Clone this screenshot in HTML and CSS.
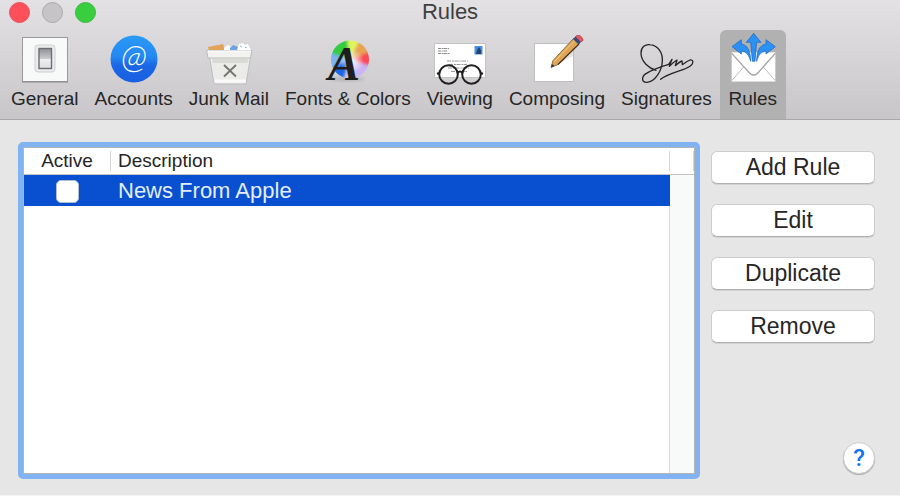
FILE: index.html
```html
<!DOCTYPE html>
<html lang="en">
  <head>
    <meta charset="UTF-8" />
    <meta name="viewport" content="width=device-width, initial-scale=1.0" />
    <title>Rules</title>
    <link rel="stylesheet" href="styles.css">
  </head>
  <body>
    <header class="window-header">
      <div class="title-bar">
        <div class="lights">
          <button class="light close" aria-label="Close"></button>
          <button class="light minimize" aria-label="Minimize"></button>
          <button class="light expand" aria-label="Zoom"></button>
        </div>
        <h1>Rules</h1>
      </div>
      <nav class="toolbar">
        <button class="tab">
          <svg viewBox="0 0 54 54" aria-hidden="true">
            <defs>
              <linearGradient id="switch" x2="0" y2="1">
                <stop offset="0" stop-color="#8f8f94" />
                <stop offset="0.5" stop-color="#c9cacd" />
                <stop offset="0.55" stop-color="#f0f0f2" />
                <stop offset="1" stop-color="#dcdde0" />
              </linearGradient>
            </defs>
            <rect x="4.5" y="6.5" width="45" height="44" fill="#f8f9f9" stroke="#9a9a9a" />
            <path d="M4 51h46" stroke="#8a8a8a" />
            <rect x="17" y="14" width="20" height="27" rx="3" fill="#ececee" stroke="#cfcfd2" />
            <rect x="21" y="17.5" width="12.500" height="20" fill="url(#switch)" stroke="#6d6e72" stroke-width="1.4" />
          </svg>
          General
        </button>
        <button class="tab">
          <svg viewBox="0 0 54 54" aria-hidden="true">
            <defs>
              <linearGradient id="at" x2="0" y2="1">
                <stop offset="0" stop-color="#2a9af6" />
                <stop offset="0.45" stop-color="#2488f2" />
                <stop offset="0.65" stop-color="#1a66e4" />
                <stop offset="1" stop-color="#1a5fe2" />
              </linearGradient>
            </defs>
            <circle cx="27" cy="28" r="23.500" fill="url(#at)" />
            <text class="at-sign" x="27" y="37" text-anchor="middle">@</text>
          </svg>
          Accounts
        </button>
        <button class="tab">
          <svg viewBox="0 0 54 54" aria-hidden="true">
            <path d="M6 16l15-3 2 7H7z" fill="#e0a45a" />
            <path d="M22 17l4-3 4 3v4h-8z" fill="#fff" />
            <path d="M28 17l3-3 5 2 1 4h-9z" fill="#6ea3e6" />
            <path d="M35 19l2-6 4-1 2 2 3-1 3 6z" fill="#fff" />
            <path d="M38 15l2 1M43 16l2 1" stroke="#8fb4e6" />
            <path d="M7.500 26h41L44 53H12z" fill="#ebebe9" stroke="#bdbdbd" />
            <path d="M10 28h36l-.5 4H11z" fill="#d9d9d5" />
            <path d="M13 50h31" stroke="#fafafa" stroke-width="3" />
            <path d="M4.500 19.500h45.500l-1.500 7.500H6z" fill="#f2f2f0" stroke="#bcbcbc" />
            <path d="M6 20h43" stroke="#fff" />
            <path d="M22 34l12 11.500M34 34L22 45.500" stroke="#74746c" stroke-width="1.800" />
          </svg>
          Junk Mail
        </button>
        <button class="tab">
          <svg viewBox="0 0 54 54" aria-hidden="true">
            <defs>
              <clipPath id="wheelClip"><circle cx="29" cy="28.500" r="19" /></clipPath>
              <filter id="soften" x="-20%" y="-20%" width="140%" height="140%"><feGaussianBlur stdDeviation="1.600" /></filter>
              <radialGradient id="wheelCenter">
                <stop offset="0" stop-color="#fff" />
                <stop offset="0.35" stop-color="#fff" stop-opacity="0.600" />
                <stop offset="1" stop-color="#fff" stop-opacity="0" />
              </radialGradient>
            </defs>
            <ellipse cx="26" cy="48" rx="17" ry="2.500" fill="#888" opacity="0.350" filter="url(#soften)" />
            <g clip-path="url(#wheelClip)">
              <g filter="url(#soften)">
                <path d="M29 28.500L0 22 12 0h15z" fill="#35cb42" />
                <path d="M29 28.500L25 0h26z" fill="#dff561" />
                <path d="M29 28.500L43 0l14 20z" fill="#e8a354" />
                <path d="M29 28.500L58 17v24z" fill="#fb4a57" />
                <path d="M29 28.500L58 38 36 58z" fill="#c8b5f2" />
                <path d="M29 28.500L38 58H17z" fill="#cdd5fb" />
                <path d="M29 28.500L20 58 0 40z" fill="#1d66e4" />
                <path d="M29 28.500L0 42V19z" fill="#7bb2f2" />
              </g>
              <circle cx="31" cy="30" r="12" fill="url(#wheelCenter)" />
            </g>
            <text class="letter" x="7" y="49">A</text>
          </svg>
          Fonts &amp; Colors
        </button>
        <button class="tab">
          <svg viewBox="0 0 54 54" aria-hidden="true">
            <rect x="1.500" y="12.500" width="51" height="34" fill="#fff" stroke="#c4c4c4" />
            <path d="M5 17.500h11M5 20h9M5 22.500h12" stroke="#8b8b8b" stroke-dasharray="3 0.600 2 0.400" />
            <path d="M14 30h21M16 33.500h18M15 37h21M18 40.500h16" stroke="#999" stroke-dasharray="4 1 2 0.500" />
            <rect x="41.500" y="15" width="8" height="8.500" fill="#4a8ee8" />
            <path d="M43 23l1-4 2-3 2 3v4z" fill="#26436f" />
            <g fill="none" stroke="#202020" stroke-width="2">
              <circle cx="15.500" cy="43.500" r="9.300" />
              <circle cx="38.500" cy="43.500" r="9.300" />
              <path d="M24.500 42q2.500-3 5 0M6.500 42l-2.500.8M47.500 42l2.500.8" />
            </g>
          </svg>
          Viewing
        </button>
        <button class="tab">
          <svg viewBox="0 0 54 54" aria-hidden="true">
            <rect x="4.500" y="12.500" width="39" height="38" fill="#fff" stroke="#bfbfbf" />
            <path d="M23 36l20-11v-5L30 27z" fill="#e4e4e4" />
            <path d="M21 36.500l2-7L44 7l5.500 5.500L28 33.500z" fill="#dda657" stroke="#7c5527" stroke-width="0.800" />
            <path d="M24 31L45 9.500" stroke="#f1c886" />
            <path d="M28 33.500l21-20.500" stroke="#4c3218" stroke-width="1.200" />
            <path d="M21 36.500l1-3.500 2.500 2z" fill="#333" />
            <path d="M43 8l2.500-2.500 5.500 5.500-2.500 2.500z" fill="#374a78" />
            <path d="M45.500 5.500l1.500-1q3-1 5 2t.5 3.500L51 11z" fill="#e75762" stroke="#873b45" stroke-width="0.600" />
          </svg>
          Composing
        </button>
        <button class="tab">
          <svg viewBox="78 18 162 162" aria-hidden="true">
            <path d="M129 136C108 130 84 110 84 84c0-18 13-27 27-25 24 2 38 24 37 48-1 31-22 63-46 65-17 1-17-17-3-26 17-11 41-20 68-28l10-15-8 21c8-8 16-15 23-19l-5 17c8-7 14-12 20-14l1 11c7-5 15-11 23-14 10-2 12 9 2 17-21 17-62 18-90 41" fill="none" stroke="#262626" stroke-width="4" stroke-linecap="round" stroke-linejoin="round" />
          </svg>
          Signatures
        </button>
        <button class="tab selected" aria-current="page">
          <svg viewBox="51 33 162 162" aria-hidden="true">
            <rect x="68" y="97" width="131" height="88" fill="#fff" />
            <path d="M69 181l35-40M198 181l-35-40" stroke="#bcbcbc" stroke-width="3" />
            <path d="M68 100l49 54q17 22 34 0l48-54" fill="#fff" stroke="#a2a2a2" stroke-width="4" />
            <path d="M69 184.500h130" stroke="#d5d5d5" stroke-width="2" />
            <g fill="#2c91f5" stroke="#1763bd" stroke-width="2" stroke-linejoin="round">
              <path d="M134 40l22 27h-13l-5 57h-8l-5-57h-13z" />
              <path d="M69 80l28-21v13c20 3 28 23 28 52-5-18-13-30-28-31v9z" />
              <path d="M199 80l-28-21v13c-20 3-28 23-28 52 5-18 13-30 28-31v9z" />
            </g>
          </svg>
          Rules
        </button>
      </nav>
    </header>

    <main class="panel">
      <div class="rules-list">
        <table>
          <thead>
            <tr>
              <th class="col-active"><span>Active</span></th>
              <th class="col-description"><span>Description</span></th>
              <th class="col-scroll"><span></span></th>
            </tr>
          </thead>
          <tbody>
            <tr class="rule selected">
              <td class="col-active"><input type="checkbox" id="rule1" /></td>
              <td class="col-description"><label for="rule1">News From Apple</label></td>
              <td class="col-scroll"></td>
            </tr>
          </tbody>
        </table>
      </div>
      <div class="actions">
        <button class="action">Add Rule</button>
        <button class="action">Edit</button>
        <button class="action">Duplicate</button>
        <button class="action">Remove</button>
        <button class="help">?</button>
      </div>
    </main>
  </body>
</html>
```
FILE: styles.css
```css
* {
  box-sizing: border-box;
}
body {
  margin: 0;
  min-height: 100vh;
  display: flex;
  flex-direction: column;
  font-family: "Liberation Sans", Arial, sans-serif;
  background-color: #e6e6e6;
  color: #262626;
}
button {
  font-family: inherit;
  color: inherit;
  border: none;
  padding: 0;
}

/* Title bar and toolbar */
.window-header {
  background: linear-gradient(#e3e1e4, #c8c6c9);
  border-bottom: 1px solid #a8a8a8;
}
.title-bar {
  display: grid;
  grid-template-columns: 1fr auto 1fr;
  align-items: center;
  height: 24px;
  margin-bottom: 6px;
}
.lights {
  display: flex;
  gap: 12px;
  padding-left: 9px;
}
.light {
  width: 21px;
  height: 21px;
  border-radius: 50%;
}
.close {
  background-color: #fb4f5b;
  border: 1px solid #e9515b;
}
.minimize {
  background-color: #c6c4c6;
  border: 1px solid #aaa8aa;
}
.expand {
  background-color: #38ce3f;
  border: 1px solid #39b93f;
}
h1 {
  margin: 0;
  font-size: 22px;
  line-height: 24px;
  font-weight: normal;
  color: #404040;
}
.toolbar {
  display: flex;
  padding-left: 3px;
}
.tab {
  display: flex;
  flex-direction: column;
  align-items: center;
  gap: 2px;
  padding: 1px 8px 8px;
  font-size: 19px;
  line-height: 24px;
  white-space: nowrap;
  background: none;
}
.tab.selected {
  background-color: #b2b1b2;
  border-radius: 6px 6px 0 0;
}
.tab svg {
  width: 54px;
  height: 54px;
  margin: 0 -2px;
  overflow: visible;
}
.at-sign {
  font-family: Lato, sans-serif;
  font-size: 34px;
  font-style: italic;
  font-weight: 300;
  fill: #fff;
}
.letter {
  font-family: "Liberation Serif", serif;
  font-size: 48px;
  font-style: italic;
  font-weight: bold;
  fill: #1e1e1e;
}

/* Rules list */
.panel {
  flex: 1;
  display: flex;
  gap: 11px;
  padding: 22px 25px 16px 18px;
  border-bottom: 1px solid #f6f6f6;
}
.rules-list {
  flex: 1;
  border: 5px solid #81b2f2;
  border-radius: 5px;
  box-shadow: inset 0 0 0 1px #b4b4b4;
  padding: 1px;
  background: linear-gradient(to left, #f8f9f9 25px, #dcdcdc 25px, #dcdcdc 26px, #fff 26px);
}
table {
  width: 100%;
  table-layout: fixed;
  border-collapse: collapse;
}
th,
td {
  padding: 0;
  text-align: left;
}
th {
  height: 26px;
  font-size: 19px;
  font-weight: normal;
  background-color: #fff;
  border-bottom: 1px solid #c4c4c4;
}
th span {
  display: block;
  height: 20px;
  line-height: 20px;
  border-right: 1px solid #d4d4d4;
}
.col-active {
  width: 87px;
  text-align: center;
}
.col-description {
  padding-left: 7px;
}
.col-scroll {
  width: 24px;
}
.rule td {
  height: 32px;
  padding-top: 2px;
  font-size: 22px;
  line-height: 24px;
}
.rule.selected .col-active,
.rule.selected .col-description {
  background-color: #0850d0;
  color: #e4edfb;
}
input[type="checkbox"] {
  appearance: none;
  display: block;
  width: 23px;
  height: 23px;
  margin: 0 auto;
  background-color: #fff;
  border: 1px solid #b4bdcf;
  border-radius: 5px;
}
input[type="checkbox"]:checked {
  background-color: #2c91f5;
}

/* Buttons on the right */
.actions {
  width: 164px;
  display: flex;
  flex-direction: column;
  gap: 20px;
  padding: 9px 0 5px;
}
.action {
  height: 33px;
  font-size: 23px;
  background-color: #fff;
  border: 1px solid #cdcdcd;
  border-bottom-color: #b0b0b0;
  border-radius: 6px;
  box-shadow: 0 1px 0 #d2d2d2;
}
.help {
  width: 32px;
  height: 32px;
  margin-top: auto;
  align-self: flex-end;
  font-family: Roboto, sans-serif;
  font-size: 24px;
  font-weight: 500;
  color: #1272f2;
  background-color: #fff;
  border: 1px solid #cdcdcd;
  border-radius: 50%;
  box-shadow: 0 1px 1px #a8a8a8;
}
```
